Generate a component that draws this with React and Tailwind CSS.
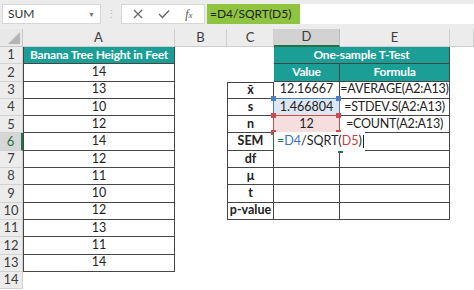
import React from 'react'

const FONT = "font-['Lato','Open_Sans',sans-serif]"

// column letters for the header row
const COLS = ['A', 'B', 'C', 'D', 'E', '']
const HEIGHTS = ['14', '13', '10', '12', '14', '12', '11', '10', '12', '13', '11', '14']

const LABELS = ['x̄', 's', 'n', 'SEM', 'df', 'μ', 't', 'p-value']

function Corner({ color, pos }) {
  return <span className={`absolute w-[5px] h-[5px] ${color} ${pos}`} />
}

function TopBar() {
  return (
    <div className="h-[29px] bg-[#ececec] flex items-start pt-[4px] pl-[2px]">
      {/* name box */}
      <div className="w-[99px] h-[20px] bg-white border border-[#d6d6d6] flex items-center justify-between px-[5px]">
        <span className="text-[12px] text-[#333]">SUM</span>
        <span className="text-[7px] text-[#777]">▼</span>
      </div>
      <div className="w-[20px] h-[20px] flex items-center justify-center text-[#b8b8b8] text-[11px]">⋮</div>
      {/* cancel / enter / fx */}
      <div className="w-[84px] h-[20px] bg-white border border-[#d6d6d6] flex items-center justify-around px-[4px] text-[#666]">
        <svg width="10" height="10" viewBox="0 0 10 10">
          <path d="M1 1L9 9M9 1L1 9" stroke="#666" strokeWidth="1.2" fill="none" />
        </svg>
        <svg width="12" height="10" viewBox="0 0 12 10">
          <path d="M1 5L4.5 8.5L11 1.5" stroke="#666" strokeWidth="1.3" fill="none" />
        </svg>
        <span className="italic font-['Liberation_Serif',serif] text-[12px] text-[#555]">
          f<span className="text-[9px]">x</span>
        </span>
      </div>
      {/* formula bar */}
      <div className="flex-1 h-[20px] bg-white flex items-stretch ml-[2px]">
        <div className="w-[93px] bg-[#8fc441] flex items-center pl-[3px] text-[12px] text-[#222]">=D4/SQRT(D5)</div>
      </div>
    </div>
  )
}

function HeaderRow() {
  return (
    <>
      <div className="relative bg-[#e8e8e8] border-r border-b border-[#c8c8c8]">
        <span className="absolute right-[2px] bottom-[2px] w-0 h-0 border-l-[12px] border-l-transparent border-b-[12px] border-b-[#b5b5b5]" />
      </div>
      {COLS.map((c, i) => (
        <div
          key={i}
          className={
            c === 'D'
              ? 'bg-[#d2d2d2] border-r border-b-2 border-r-[#bdbdbd] border-b-[#217346] flex items-center justify-center text-[13px] text-[#3c3c3c]'
              : 'bg-[#ececec] border-r border-b border-[#cfcfcf] flex items-center justify-center text-[13px] text-[#3c3c3c]'
          }
        >
          {c}
        </div>
      ))}
    </>
  )
}

function RowHead({ n }) {
  const active = n === 6
  return (
    <div
      className={
        active
          ? 'bg-[#d6d6d6] border-b border-b-[#cfcfcf] border-r-2 border-r-[#217346] flex items-center justify-center text-[13px] text-[#217346]'
          : 'bg-[#ececec] border-b border-r border-[#d2d2d2] flex items-center justify-center text-[13px] text-[#3c3c3c]'
      }
    >
      {n}
    </div>
  )
}

const line = 'border-[#454545]'
const body = 'text-[12.5px] text-[#222] whitespace-nowrap'
const head = 'bg-[#1a9e96] text-white font-bold text-[12px] tracking-[-0.2px] whitespace-nowrap'

export default function App() {
  const rows = []
  for (let r = 1; r <= 14; r++) {
    // col A
    let a = null
    if (r === 1) {
      a = (
        <div className={`${head} border-l border-r border-b ${line} flex items-center justify-center`}>
          Banana Tree Height in Feet
        </div>
      )
    } else if (r <= 13) {
      a = (
        <div className={`${body} border-l border-r border-b ${line} flex items-center justify-center`}>
          {HEIGHTS[r - 2]}
        </div>
      )
    } else {
      a = <div />
    }

    // col C labels
    let c = <div />
    if (r >= 3 && r <= 10) {
      c = (
        <div
          className={
            r === 3
              ? `border-l border-t border-r border-b ${line} flex items-center justify-center font-bold text-[12.5px] text-[#222]`
              : `border-l border-r border-b ${line} flex items-center justify-center font-bold text-[12.5px] text-[#222]`
          }
        >
          {LABELS[r - 3]}
        </div>
      )
    }

    // col D and E
    let de = [<div key="d" />, <div key="e" />]
    if (r === 1) {
      de = [
        <div key="de" className={`col-span-2 ${head} border-r border-b ${line} flex items-center justify-center`}>
          One-sample T-Test
        </div>,
      ]
    } else if (r === 2) {
      de = [
        <div key="d" className={`${head} border-r border-b ${line} flex items-center justify-center`}>Value</div>,
        <div key="e" className={`${head} border-r border-b ${line} flex items-center justify-center`}>Formula</div>,
      ]
    } else if (r === 3) {
      de = [
        <div key="d" className={`${body} border-r border-b ${line} flex items-center justify-center`}>12.16667</div>,
        <div key="e" className={`${body} tracking-[-0.2px] border-r border-b ${line} flex items-center justify-center`}>=AVERAGE(A2:A13)</div>,
      ]
    } else if (r === 4) {
      de = [
        <div key="d" className={`relative bg-[#dde7f3] ${body} border-r border-b ${line} flex items-center justify-center`}>
          <span className="absolute -inset-[1px] border border-[#4a7ec4]" />
          <Corner color="bg-[#4a7ec4]" pos="-left-[3px] -top-[3px]" />
          <Corner color="bg-[#4a7ec4]" pos="-right-[2px] -top-[3px]" />
          <Corner color="bg-[#4a7ec4]" pos="-left-[3px] -bottom-[3px]" />
          <Corner color="bg-[#4a7ec4]" pos="-right-[2px] -bottom-[3px]" />
          <span className="relative">1.466804</span>
        </div>,
        <div key="e" className={`${body} tracking-[-0.2px] border-r border-b ${line} flex items-center justify-center`}>=STDEV.S(A2:A13)</div>,
      ]
    } else if (r === 5) {
      de = [
        <div key="d" className={`relative bg-[#f7dede] ${body} border-r border-b ${line} flex items-center justify-center`}>
          <span className="absolute -inset-[1px] border border-[#d24a4a]" />
          <Corner color="bg-[#d24a4a]" pos="-left-[3px] -top-[3px]" />
          <Corner color="bg-[#d24a4a]" pos="-right-[2px] -top-[3px]" />
          <Corner color="bg-[#d24a4a]" pos="-left-[3px] -bottom-[3px]" />
          <Corner color="bg-[#d24a4a]" pos="-right-[2px] -bottom-[3px]" />
          <span className="relative">12</span>
        </div>,
        <div key="e" className={`${body} tracking-[-0.2px] border-r border-b ${line} flex items-center justify-center`}>=COUNT(A2:A13)</div>,
      ]
    } else if (r === 6) {
      de = [
        <div key="d" className={`relative z-10 border-b ${line} flex items-center`}>
          <span className="absolute -left-[1px] -top-[1px] -bottom-[1px] w-[68px] border-2 border-[#217346]" />
          <span className="absolute -right-[3px] -bottom-[3px] w-[5px] h-[5px] bg-[#217346]" />
          <span className={`relative bg-white pl-[3px] pr-[1px] ${body} flex items-center`}>
            <span className="text-[#217346]">=</span>
            <span className="text-[#3b6fc4]">D4</span>/SQRT(<span className="text-[#d03a3a]">D5</span>)
            <span className="inline-block w-[1px] h-[13px] bg-[#222] ml-[1px]" />
          </span>
        </div>,
        <div key="e" className={`border-r border-b ${line}`} />,
      ]
    } else if (r <= 10) {
      de = [
        <div key="d" className={`border-r border-b ${line}`} />,
        <div key="e" className={`border-r border-b ${line}`} />,
      ]
    }

    rows.push(
      <React.Fragment key={r}>
        <RowHead n={r} />
        {a}
        <div />
        {c}
        {de}
        <div />
      </React.Fragment>
    )
  }

  return (
    <div className={`w-[474px] h-[290px] overflow-hidden bg-white ${FONT}`}>
      <TopBar />
      <div className="grid grid-cols-[23px_152px_52px_47px_66px_110px_1fr] grid-rows-[18px_repeat(14,17.3px)]">
        <HeaderRow />
        {rows}
      </div>
    </div>
  )
}
